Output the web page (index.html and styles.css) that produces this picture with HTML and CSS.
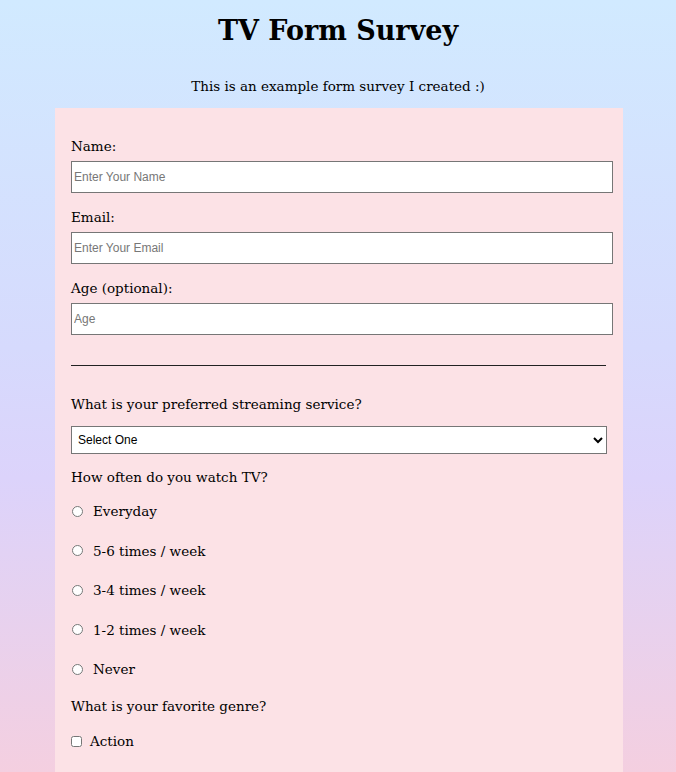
FILE: index.html
```html
<!DOCTYPE html>
<html lang="en">
<head>
<meta charset="utf-8">
<title>TV Form Survey</title>
<link rel="stylesheet" href="styles.css">
</head>
<body>
<h1 class="title">TV Form Survey</h1>
<p class="description">This is an example form survey I created :)</p>
<form class="survey">
  <label class="field-label first" for="name">Name:</label>
  <input class="text-input" id="name" type="text" placeholder="Enter Your Name">
  <label class="field-label" for="email">Email:</label>
  <input class="text-input" id="email" type="email" placeholder="Enter Your Email">
  <label class="field-label" for="age">Age (optional):</label>
  <input class="text-input" id="age" type="number" placeholder="Age">
  <hr class="divider">
  <p class="question q-service">What is your preferred streaming service?</p>
  <select class="dropdown">
    <option>Select One</option>
  </select>
  <p class="question q-often">How often do you watch TV?</p>
  <div class="radio-list">
    <label class="radio-row"><input type="radio" name="often" class="radio"><span>Everyday</span></label>
    <label class="radio-row"><input type="radio" name="often" class="radio"><span>5-6 times / week</span></label>
    <label class="radio-row"><input type="radio" name="often" class="radio"><span>3-4 times / week</span></label>
    <label class="radio-row"><input type="radio" name="often" class="radio"><span>1-2 times / week</span></label>
    <label class="radio-row"><input type="radio" name="often" class="radio"><span>Never</span></label>
  </div>
  <p class="question q-genre">What is your favorite genre?</p>
  <div class="check-list">
    <label class="check-row"><input type="checkbox" class="check"><span>Action</span></label>
  </div>
</form>
</body>
</html>
```
FILE: styles.css
```css
html, body {
  margin: 0;
  padding: 0;
}
body {
  height: 772px;
  background: linear-gradient(180deg, #d1eaff 0%, #d6dafd 45%, #dcd3fb 62%, #f4cfe0 100%);
  font-family: "DejaVu Serif", serif;
  font-size: 13.5px;
  color: #000;
  overflow: hidden;
}
.title {
  margin: 0;
  padding-top: 14px;
  height: 34px;
  line-height: 34px;
  text-align: center;
  font-size: 27px;
  font-weight: bold;
}
.description {
  margin: 28px 0 0;
  line-height: 20px;
  text-align: center;
}
.survey {
  width: 536px;
  margin: 12px 0 0 55px;
  padding: 28px 16px 60px;
  background: #fce2e6;
}
.field-label {
  display: block;
  line-height: 20px;
  margin: 14px 0 5px;
}
.field-label.first {
  margin-top: 0;
}
.text-input {
  display: block;
  width: 536px;
  height: 30px;
  margin: 0;
  padding: 0 2px;
  border: 1px solid #767676;
  background: #fff;
  font-family: "Liberation Sans", Arial, sans-serif;
  font-size: 12px;
  color: #222;
}
.text-input::placeholder {
  color: #777;
}
.divider {
  margin: 30px 0 0;
  width: 535px;
  border: 0;
  border-top: 1px solid #222;
  height: 0;
}
.question {
  margin: 0;
  line-height: 20px;
}
.q-service {
  margin-top: 28px;
}
.dropdown {
  display: block;
  width: 536px;
  height: 28px;
  margin: 12px 0 0;
  padding: 0 2px;
  border: 1px solid #767676;
  border-radius: 0;
  background: #fff;
  font-family: "Liberation Sans", Arial, sans-serif;
  font-size: 12px;
  color: #000;
}
.q-often {
  margin-top: 13px;
}
.radio-list {
  display: flex;
  flex-direction: column;
  gap: 19.6px;
  margin-top: 14px;
}
.radio-row {
  display: flex;
  align-items: center;
  height: 20px;
}
.radio {
  width: 11px;
  height: 11px;
  margin: 0 10px 0 1px;
}
.q-genre {
  margin-top: 17px;
}
.check-list {
  display: flex;
  flex-direction: column;
  gap: 18px;
  margin-top: 15px;
}
.check-row {
  display: flex;
  align-items: center;
  height: 20px;
}
.check {
  width: 11px;
  height: 11px;
  margin: 0 8px 0 0;
}
```
